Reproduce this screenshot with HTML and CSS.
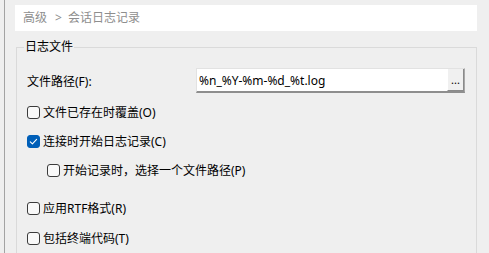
FILE: index.html
```html
<!DOCTYPE html>
<html lang="zh-CN">
<head>
<meta charset="utf-8">
<title>会话日志记录</title>
<link rel="stylesheet" href="styles.css">
</head>
<body>
<div class="window">
  <div class="rail"></div>
  <main class="content">
    <div class="crumb">高级<span class="sep">&gt;</span>会话日志记录</div>
    <fieldset class="group">
      <legend class="group-title">日志文件</legend>
      <div class="path-row">
        <label class="path-label">文件路径(F):</label>
        <div class="path-input">
          <span class="path-text">%n_%Y-%m-%d_%t.log</span>
          <button class="browse">...</button>
        </div>
      </div>
      <label class="check first"><span class="box"></span>文件已存在时覆盖(O)</label>
      <label class="check second"><span class="box checked"><svg viewBox="0 0 13 13" width="13" height="13"><path d="M3.3 6.8 L5.4 8.8 L9.6 4.4" fill="none" stroke="#fff" stroke-width="1.1" stroke-linecap="round" stroke-linejoin="round"/></svg></span>连接时开始日志记录(C)</label>
      <label class="check third sub"><span class="box"></span>开始记录时，选择一个文件路径(P)</label>
      <label class="check fourth"><span class="box"></span>应用RTF格式(R)</label>
      <label class="check fifth"><span class="box"></span>包括终端代码(T)</label>
    </fieldset>
  </main>
</div>
</body>
</html>
```

FILE: styles.css
```css
html, body {
  margin: 0;
  padding: 0;
}
body {
  width: 489px;
  height: 253px;
  overflow: hidden;
  background: #efefef;
  font-family: "Noto Sans", "Noto Sans CJK SC", sans-serif;
  font-size: 12px;
  color: #1a1a1a;
}
.window {
  display: flex;
  height: 253px;
}
.rail {
  width: 4px;
  border-right: 1px solid #a3a3a3;
  flex: none;
}
.content {
  margin-left: 10px;
  width: 462px;
  display: flex;
  flex-direction: column;
}
.crumb {
  margin-top: 5px;
  height: 26px;
  line-height: 26px;
  background: #fff;
  color: #8e8e8e;
  padding-left: 8px;
  font-size: 12px;
}
.sep {
  margin: 0 6px 0 8px;
}
.group {
  margin: 8px 0 0 1px;
  width: 461px;
  box-sizing: border-box;
  border: 1px solid #dadada;
  border-bottom: none;
  padding: 0;
  flex: 1;
  min-width: 0;
}
.group-title {
  margin-left: 7px;
  padding: 0 1px;
  line-height: 16px;
  color: #000;
}
.path-row {
  display: flex;
  align-items: center;
  margin-top: 13px;
  padding-left: 10px;
}
.path-label {
  width: 169px;
  flex: none;
  color: #000;
}
.path-input {
  width: 269px;
  height: 25px;
  box-sizing: border-box;
  background: #fff;
  border: 1px solid #e2e2e2;
  border-right-color: #a8a8a8;
  border-bottom: 2px solid #8e8e8e;
  display: flex;
  align-items: center;
}
.path-text {
  flex: 1;
  padding-left: 2px;
  font-size: 12px;
  color: #000;
}
.browse {
  width: 17px;
  height: 22px;
  align-self: flex-start;
  padding: 0;
  background: #f0f0f0;
  border: none;
  border-left: 1px solid #ffffff;
  border-right: 1px solid #8a8a8a;
  border-bottom: 1px solid #8a8a8a;
  font-family: "Noto Sans", sans-serif;
  font-size: 11px;
  line-height: 22px;
  color: #000;
}
.check {
  display: flex;
  align-items: center;
  gap: 3px;
  height: 16px;
  margin-left: 10px;
  color: #000;
}
.check.sub {
  margin-left: 30px;
}
.check.first { margin-top: 11px; }
.check.second { margin-top: 13px; }
.check.third { margin-top: 13px; }
.check.fourth { margin-top: 22px; }
.check.fifth { margin-top: 14px; }
.box {
  width: 13px;
  height: 13px;
  box-sizing: border-box;
  border: 1px solid #3b3b3b;
  border-radius: 3px;
  background: #f9f9f9;
  flex: none;
  display: flex;
}
.box.checked {
  background: #005fb8;
  border-color: #005fb8;
}
.box.checked svg {
  margin: -1px;
}
```
